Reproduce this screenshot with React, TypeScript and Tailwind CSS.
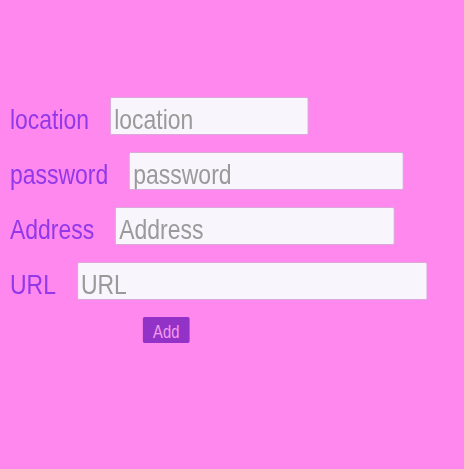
import React from "react";

// the reference uses a narrow face; no narrow font is installed, so the form
// is drawn in Liberation Sans and squeezed horizontally by 0.82
const rows = [
  { label: "location", width: "w-[242px]" },
  { label: "password", width: "w-[335px]" },
  { label: "Address", width: "w-[341px]" },
  { label: "URL", width: "w-[427px]" },
];

export default function App() {
  return (
    <div className="min-h-[469px] w-full overflow-hidden bg-[#ff88ee] pt-[97px] pl-[10px] font-['Liberation_Sans',Arial,sans-serif]">
      <div className="w-[540px] origin-top-left scale-x-[0.82] flex flex-col gap-[17px]">
        {rows.map((r) => (
          <div key={r.label} className="flex items-center gap-[25.5px] h-[38px]">
            <label className="shrink-0 pt-[8px] text-[28px] leading-none text-[#9238e8]">{r.label}</label>
            <input
              placeholder={r.label}
              className={`${r.width} shrink-0 h-[38px] px-[4px] pt-[7px] pb-0 text-[28px] bg-[#f9f5fc] border border-[#d7a6d6] rounded-[2px] outline-none placeholder:text-[#9a9a9a]`}
            />
          </div>
        ))}
        <div className="flex">
          <button className="ml-[162px] w-[57px] h-[26px] pt-[3px] rounded-[2px] bg-[#9332c6] text-[#f49cf0] text-[18px] leading-none">
            Add
          </button>
        </div>
      </div>
    </div>
  );
}
